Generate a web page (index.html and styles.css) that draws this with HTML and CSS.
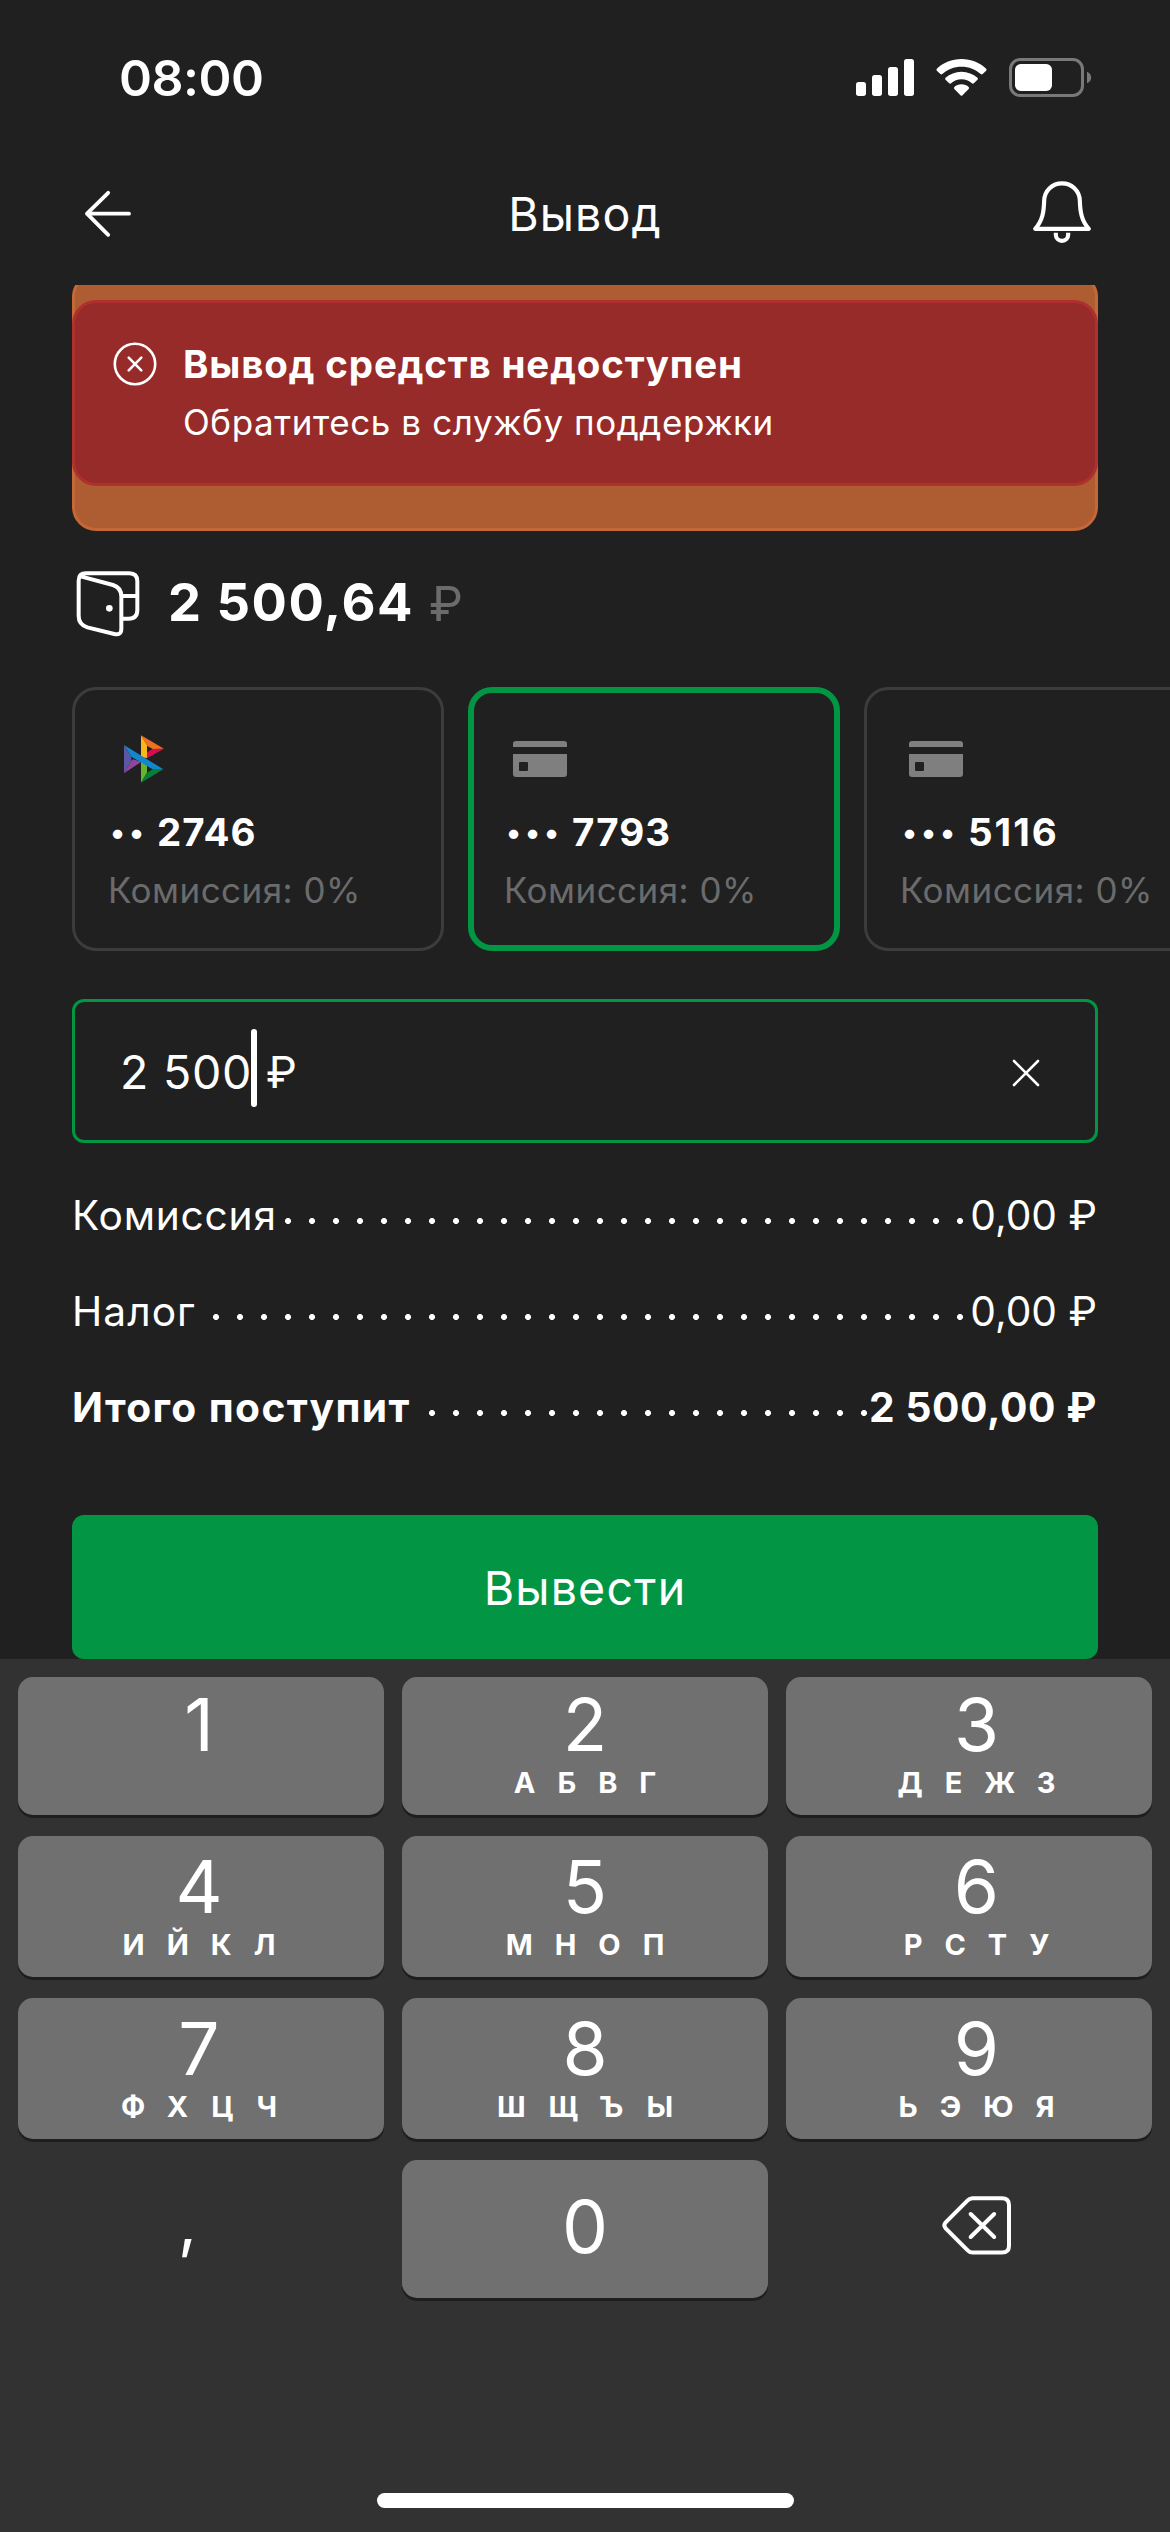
FILE: index.html
```html
<!DOCTYPE html>
<html lang="ru">
<head>
<meta charset="utf-8">
<title>Вывод</title>
<link rel="stylesheet" href="styles.css">
</head>
<body>
<div class="screen">
  <div class="status">
    <span class="time">08:00</span>
    <svg class="status-icons" viewBox="48 51 708 120">
      <g fill="#fff">
        <rect x="48" y="126" width="30" height="42" rx="8"/>
        <rect x="96" y="105" width="30" height="63" rx="8"/>
        <rect x="144" y="81" width="30" height="87" rx="8"/>
        <rect x="192" y="57" width="30" height="111" rx="8"/>
        <path d="M364.500 57 C393 57 419 68 438.500 86 Q441 89 438.500 92 L428 102 Q425 104.500 422 102 C407 88 387 80 364.500 80 C342 80 322 88 307 102 Q304 104.500 301 102 L290.500 92 Q288 89 290.500 86 C310 68 336 57 364.500 57 Z"/>
        <path d="M364.500 95 C383 95 399.500 102 412.500 113.500 Q415 116.500 412.500 119.500 L401.500 130 Q398.500 132.500 395.500 130 C387 122.500 376.500 118 364.500 118 C352.500 118 342 122.500 333.500 130 Q330.500 132.500 327.500 130 L316.500 119.500 Q314 116.500 316.500 113.500 C329.500 102 346 95 364.500 95 Z"/>
        <path d="M364.500 133 C373 133 380.500 136 386 141 Q388.500 144 386 147 L367.500 166 Q364.500 169 361.500 166 L343 147 Q340.500 144 343 141 C348.500 136 356 133 364.500 133 Z"/>
        <rect x="525" y="72" width="111" height="81" rx="17"/>
      </g>
      <rect x="511.500" y="58.500" width="216" height="108" rx="29" fill="none" stroke="#797979" stroke-width="9"/>
      <path d="M741 95 C749 98 753.500 105 753.500 112.500 C753.500 120 749 127 741 130 Z" fill="#797979"/>
    </svg>
  </div>

  <header class="header">
    <svg class="back" viewBox="72 90 144 144" fill="none" stroke="#fff" stroke-width="11.500" stroke-linecap="round" stroke-linejoin="round">
      <path d="M207 161 H81 M144.500 98.500 L81 161 L144.500 224.500"/>
    </svg>
    <h1 class="title">Вывод</h1>
    <svg class="bell" viewBox="576 420 180 192" fill="none" stroke="#fff" stroke-width="12.500" stroke-linejoin="round">
      <path d="M666 430 C695 430 718.500 452 719.500 482 C720.500 515 724 542 746.500 566.500 H585.500 C608 542 611.500 515 612.500 482 C613.500 452 637 430 666 430 Z"/>
      <path d="M647.500 578 V584 A18.500 18.500 0 0 0 684.500 584 V578"/>
    </svg>
  </header>

  <div class="notices">
    <div class="notice-back">
      <div class="notice">
        <svg class="notice-icon" viewBox="0 0 48 48" fill="none" stroke="#fff" stroke-width="2.600" stroke-linecap="round">
          <circle cx="24" cy="24" r="20.200"/>
          <path d="M17.700 17.700 L30.300 30.300 M30.300 17.700 L17.700 30.300"/>
        </svg>
        <div class="notice-body">
          <div class="notice-title">Вывод средств недоступен</div>
          <div class="notice-text">Обратитесь в службу поддержки</div>
        </div>
      </div>
    </div>
  </div>

  <div class="balance">
    <svg class="wallet" viewBox="45 60 198 201" fill="none" stroke="#fff" stroke-width="12" stroke-linejoin="round">
      <path d="M62 79 L159 105 Q184 113 184 139 V236 Q184 257 163 252 L82 232 Q56 224 56 198 V92 Q56 70 78 70 H208 Q232 70 232 94 V180 Q232 206 206 206 H186"/>
      <path d="M186 138 H230"/>
      <circle cx="148" cy="175" r="10" fill="#fff" stroke="none"/>
    </svg>
    <span class="amount">2 500,64</span>
    <span class="currency">₽</span>
  </div>

  <div class="cards">
    <div class="card">
      <svg class="card-icon" viewBox="144 519 216 216">
        <path d="M192 585 L218 627 L192 670 Z" fill="#5b57a2"/>
        <path d="M218 627 L243 636 L192 670 Z" fill="#90479a"/>
        <path d="M214 620 L222 625 L214 632 Z" fill="#202020"/>
        <path d="M243 556 L261 585 V624 L243 622 Z" fill="#fbb61b"/>
        <path d="M243 556 L312 596 L278 597 L261 587 Z" fill="#ee7023"/>
        <path d="M278 597 L312 596 L261 625 V607 Z" fill="#d90b51"/>
        <path d="M243 630 L261 640 V668 L243 698 Z" fill="#65b32e"/>
        <path d="M261 668 L278 658 H310 L243 698 Z" fill="#087f38"/>
        <path d="M192 585 L310 658 H278 L214 620 Z" fill="#1387cb"/>
      </svg>
      <div class="card-number"><span class="mask">••</span><span class="digits">2746</span></div>
      <div class="card-fee">Комиссия: 0%</div>
    </div>
    <div class="card card-active">
      <svg class="card-icon" viewBox="0 0 72 72" fill="#7f7f7f">
        <path d="M9 24 V21 Q9 18 12 18 H60 Q63 18 63 21 V24 Z"/>
        <path fill-rule="evenodd" d="M9 31 H63 V51 Q63 54 60 54 H12 Q9 54 9 51 Z M16 39 Q15 39 15 40 V47 Q15 48 16 48 H23 Q24 48 24 47 V40 Q24 39 23 39 Z"/>
      </svg>
      <div class="card-number"><span class="mask">•••</span><span class="digits">7793</span></div>
      <div class="card-fee">Комиссия: 0%</div>
    </div>
    <div class="card">
      <svg class="card-icon" viewBox="0 0 72 72" fill="#7f7f7f">
        <path d="M9 24 V21 Q9 18 12 18 H60 Q63 18 63 21 V24 Z"/>
        <path fill-rule="evenodd" d="M9 31 H63 V51 Q63 54 60 54 H12 Q9 54 9 51 Z M16 39 Q15 39 15 40 V47 Q15 48 16 48 H23 Q24 48 24 47 V40 Q24 39 23 39 Z"/>
      </svg>
      <div class="card-number"><span class="mask">•••</span><span class="digits digits-loose">5116</span></div>
      <div class="card-fee">Комиссия: 0%</div>
    </div>
  </div>

  <div class="field">
    <span class="field-value">2 500</span>
    <span class="caret"></span>
    <span class="field-currency">₽</span>
    <svg class="clear" viewBox="0 0 30 30" fill="none" stroke="#fff" stroke-width="2.600" stroke-linecap="round">
      <path d="M3 3 L27 27 M27 3 L3 27"/>
    </svg>
  </div>

  <div class="totals">
    <div class="row"><span class="label">Комиссия</span><span class="value">0,00 ₽</span></div>
    <div class="row"><span class="label label-short">Налог</span><span class="value">0,00 ₽</span></div>
    <div class="row row-total"><span class="label">Итого поступит</span><span class="value">2 500,00 ₽</span></div>
  </div>

  <button class="submit">Вывести</button>

  <div class="keyboard">
    <div class="keys">
      <div class="key left"><span class="digit">1</span><span class="letters"></span></div>
      <div class="key"><span class="digit">2</span><span class="letters">АБВГ</span></div>
      <div class="key right"><span class="digit">3</span><span class="letters">ДЕЖЗ</span></div>
      <div class="key left"><span class="digit">4</span><span class="letters">ИЙКЛ</span></div>
      <div class="key"><span class="digit">5</span><span class="letters">МНОП</span></div>
      <div class="key right"><span class="digit">6</span><span class="letters">РСТУ</span></div>
      <div class="key left"><span class="digit">7</span><span class="letters wide">ФХЦЧ</span></div>
      <div class="key"><span class="digit">8</span><span class="letters wide">ШЩЪЫ</span></div>
      <div class="key right"><span class="digit">9</span><span class="letters">ЬЭЮЯ</span></div>
      <div class="key plain comma"><span class="digit">,</span></div>
      <div class="key zero"><span class="digit">0</span></div>
      <div class="key plain erase">
        <svg class="erase-icon" viewBox="123 136 213 183" fill="none" stroke="#fff" stroke-width="12" stroke-linecap="round" stroke-linejoin="round">
          <path d="M216 145.500 H306 Q327 145.500 327 166 V288 Q327 308.500 306 308.500 H218 Q209 308.500 203 302 L137 236 Q129 227 137 218 L203 152 Q209 145.500 218 145.500"/>
          <path d="M212 193 L282.500 262 M282.500 193 L212 262"/>
        </svg>
      </div>
    </div>
    <div class="home"></div>
  </div>
</div>
</body>
</html>
```
FILE: styles.css
```css
* { box-sizing: border-box; margin: 0; }
body { background: #202020; }
svg { display: block; flex: none; }

.screen {
  width: 1170px;
  height: 2532px;
  display: flex;
  flex-direction: column;
  overflow: hidden;
  background: #202020;
  color: #fff;
  font-family: Inter, "Liberation Sans", sans-serif;
  font-weight: 400;
  white-space: nowrap;
}
.screen > * { flex: none; }

/* Status bar and header */
.status {
  height: 156px;
  padding: 0 78px 0 119px;
  display: flex;
  align-items: center;
  justify-content: space-between;
}
.time { font-size: 50px; font-weight: 600; letter-spacing: -0.48px; }
.status-icons { width: 236px; height: 40px; margin-bottom: 2px; }

.header {
  height: 129px;
  padding: 0 78px 13px;
  display: grid;
  grid-template-columns: 1fr auto 1fr;
  align-items: center;
}
.back { width: 48px; height: 48px; margin-left: 6px; }
.title { font-size: 46.5px; font-weight: 400; letter-spacing: 1.05px; }
.bell { width: 60px; height: 64px; justify-self: end; margin-bottom: 4px; }

/* Stacked notices, scrolled slightly under the header */
.notices { height: 246px; padding: 0 72px; overflow: hidden; }
.notice-back {
  height: 258px;
  margin-top: -12px;
  padding-top: 24px;
  border: 3px solid #c46838;
  border-radius: 24px;
  background: #ae5c32;
}
.notice {
  height: 186px;
  margin: 0 -3px;
  padding: 32px 36px;
  display: flex;
  gap: 24px;
  border: 3px solid #ae312f;
  border-radius: 24px;
  background: #972b29;
}
.notice-icon { width: 48px; height: 48px; margin-top: 5px; }
.notice-body { line-height: 58px; }
.notice-title { font-size: 38.5px; font-weight: 700; letter-spacing: 0.85px; }
.notice-text { font-size: 35px; letter-spacing: 0.58px; }

.balance {
  height: 142px;
  margin-bottom: 14px;
  padding-left: 75px;
  display: flex;
  align-items: center;
}
.wallet { width: 66px; height: 67px; margin-right: 27px; margin-top: 2px; }
.amount { width: 261px; font-size: 52.5px; font-weight: 700; letter-spacing: 1.51px; }
.currency { font-size: 48.5px; padding-top: 2px; color: #6b6b6b; }

/* Payout methods */
.cards { display: flex; gap: 24px; padding-left: 72px; }
.card {
  flex: none;
  width: 372px;
  height: 264px;
  padding: 33px;
  border: 3px solid #3c3c3c;
  border-radius: 24px;
  line-height: 58px;
}
.card-active { padding: 30px; border: 6px solid #029644; }
.card-icon { width: 72px; height: 72px; margin-bottom: 8px; }
.card-number { height: 58px; display: flex; font-size: 38.5px; font-weight: 700; }
.mask { margin-left: 2px; font-size: 30px; font-weight: 600; letter-spacing: 3.900px; }
.digits { margin-left: 9px; letter-spacing: 1px; }
.digits-loose { letter-spacing: 2px; }
.card-fee { font-size: 35px; letter-spacing: 0.47px; color: #6b6b6b; }

.field {
  height: 144px;
  margin: 48px 72px 0;
  padding: 0 54px 0 45px;
  display: flex;
  align-items: center;
  border: 3px solid #029644;
  border-radius: 12px;
  font-size: 46.5px;
}
.field-value { width: 131px; padding-top: 1px; letter-spacing: 0.74px; }
.caret { width: 6px; height: 78px; margin: 0 9px 6px 0; border-radius: 3px; background: #fff; }
.field-currency { padding-top: 2px; font-size: 44px; }
.clear { width: 30px; height: 30px; margin-left: auto; margin-top: 3px; }

/* Label/value rows; the dot leader shows between the opaque spans */
.totals { margin: 24px 72px 60px; }
.row {
  height: 96px;
  display: flex;
  justify-content: space-between;
  font-size: 40.7px;
  line-height: 98px;
  background: radial-gradient(circle at 12px 54px, #fff 2.600px, transparent 3.400px) -12px 0 / 24px 96px repeat-x;
}
.label, .value { height: 96px; background: #202020; }
.label { letter-spacing: 0.76px; padding-right: 4px; }
.label-short { letter-spacing: 1.05px; }
.value { padding-right: 1px; }
.row-total { font-weight: 700; }
.row-total .label { letter-spacing: 1.400px; padding-right: 8px; }
.row-total .value { letter-spacing: 0.600px; }

.submit {
  height: 144px;
  margin: 0 72px;
  border: 0;
  border-radius: 12px;
  background: #029644;
  color: #fff;
  font: 400 46.5px/144px Inter, "Liberation Sans", sans-serif;
  letter-spacing: 1.17px;
}

/* Numeric keyboard */
.keyboard {
  height: 873px;
  padding: 18px 18px 24px;
  display: flex;
  flex-direction: column;
  justify-content: space-between;
  background: #323232;
}
.keys {
  display: grid;
  grid-template-columns: repeat(3, 1fr);
  grid-template-rows: 138px 141px 141px 138px;
  gap: 21px 18px;
}
.key {
  padding-bottom: 16px;
  display: flex;
  flex-direction: column;
  align-items: center;
  justify-content: flex-end;
  gap: 12px;
  border-radius: 15px;
  background: #707070;
  box-shadow: 0 3px 0 #1e1e1e;
}
.key.left { padding-right: 4px; }
.key.right { padding-left: 15px; }
.key.plain { background: none; box-shadow: none; }
.digit { font-size: 73px; line-height: 60px; }
.letters {
  height: 32px;
  margin-right: -22px;
  font-size: 29px;
  font-weight: 700;
  line-height: 32px;
  letter-spacing: 22px;
}
.letters.wide { margin-right: -23px; letter-spacing: 23px; }
.key.zero { justify-content: center; padding-bottom: 5px; }
.key.comma { justify-content: center; padding: 0 27px 15px 0; }
.comma .digit { font-size: 66px; }
.key.erase { justify-content: center; padding: 0 0 7px 15px; }
.erase-icon { width: 71px; height: 61px; }

.home { width: 417px; height: 15px; margin: 0 auto; border-radius: 8px; background: #fff; }
```
